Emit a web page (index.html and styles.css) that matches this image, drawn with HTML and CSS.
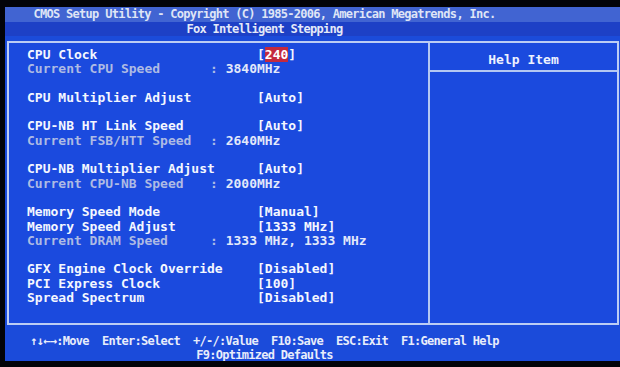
FILE: index.html
```html
<!DOCTYPE html>
<html>
<head>
<meta charset="utf-8">
<link rel="stylesheet" href="styles.css">
</head>
<body>
<div class="screen">
  <div class="title1">CMOS Setup Utility - Copyright (C) 1985-2006, American Megatrends, Inc.</div>
  <div class="title2">Fox Intelligent Stepping</div>
  <div class="main">
    <div class="left">
      <div class="row"><span class="label">CPU Clock</span><span class="value">[<span class="sel">240</span>]</span></div>
      <div class="row info"><span class="label">Current CPU Speed</span><span class="colon">: </span><span class="ivalue">3840MHz</span></div>
      <div class="row blank"></div>
      <div class="row"><span class="label">CPU Multiplier Adjust</span><span class="value">[Auto]</span></div>
      <div class="row blank"></div>
      <div class="row"><span class="label">CPU-NB HT Link Speed</span><span class="value">[Auto]</span></div>
      <div class="row info"><span class="label">Current FSB/HTT Speed</span><span class="colon">: </span><span class="ivalue">2640MHz</span></div>
      <div class="row blank"></div>
      <div class="row"><span class="label">CPU-NB Multiplier Adjust</span><span class="value">[Auto]</span></div>
      <div class="row info"><span class="label">Current CPU-NB Speed</span><span class="colon">: </span><span class="ivalue">2000MHz</span></div>
      <div class="row blank"></div>
      <div class="row"><span class="label">Memory Speed Mode</span><span class="value">[Manual]</span></div>
      <div class="row"><span class="label">Memory Speed Adjust</span><span class="value">[1333 MHz]</span></div>
      <div class="row info"><span class="label">Current DRAM Speed</span><span class="colon">: </span><span class="ivalue">1333 MHz, 1333 MHz</span></div>
      <div class="row blank"></div>
      <div class="row"><span class="label">GFX Engine Clock Override</span><span class="value">[Disabled]</span></div>
      <div class="row"><span class="label">PCI Express Clock</span><span class="value">[100]</span></div>
      <div class="row"><span class="label">Spread Spectrum</span><span class="value">[Disabled]</span></div>
    </div>
    <div class="right">
      <div class="help-head">Help Item</div>
      <div class="help-body"></div>
    </div>
  </div>
  <div class="footer">
    <div class="keys">↑↓←→:Move  Enter:Select  +/-/:Value  F10:Save  ESC:Exit  F1:General Help</div>
    <div class="keys">F9:Optimized Defaults</div>
  </div>
</div>
</body>
</html>
```

FILE: styles.css
```css
html, body {
  margin: 0;
  padding: 0;
  background: #020308;
  width: 620px;
  height: 367px;
  overflow: hidden;
}

.screen {
  margin: 7px 0 0 5px;
  width: 615px;
  height: 354px;
  background: #1b4bda;
  display: flex;
  flex-direction: column;
  font-family: "DejaVu Sans Mono", "Liberation Mono", monospace;
  font-weight: bold;
  overflow: hidden;
}

.title1, .title2, .keys {
  font-size: 12px;
  letter-spacing: -0.72px;
  white-space: pre;
  text-align: center;
  padding-right: 96px;
  color: #dfe5f6;
}

.title1 {
  height: 15px;
  line-height: 15px;
  background: #4164d2;
}

.title2 {
  height: 14px;
  line-height: 14px;
  background: #1d40c6;
  color: #e4e9f8;
}

.main {
  margin: 5px 1px 0 2px;
  height: 284px;
  box-sizing: border-box;
  border: 2px solid #bccdf4;
  display: flex;
  background: #1b4ade;
}

.left {
  width: 421px;
  box-sizing: border-box;
  padding: 5px 0 0 18px;
  border-right: 2px solid #b4c8f2;
  font-size: 13px;
}

.row {
  display: flex;
  height: 14.3px;
  line-height: 14.3px;
  white-space: pre;
  color: #f4f7ff;
}

.label {
  width: 230px;
  flex: none;
}

.info .label {
  width: 183px;
  color: #aebbe4;
}

.colon {
  color: #aebbe4;
}

.ivalue {
  color: #e2e8fa;
}

.sel {
  background: #c42a3e;
  color: #fff;
}

.right {
  flex: 1;
  display: flex;
  flex-direction: column;
}

.help-head {
  height: 29px;
  box-sizing: border-box;
  padding-top: 4px;
  line-height: 25px;
  border-bottom: 2px solid #b4c8f2;
  text-align: center;
  font-size: 13px;
  color: #eef2ff;
}

.help-body {
  flex: 1;
}

.footer {
  padding-top: 9px;
  background: #1b4bda;
  flex: 1;
  min-height: 0;
}

.keys {
  line-height: 14px;
  height: 14px;
  color: #e8edfb;
}
```
